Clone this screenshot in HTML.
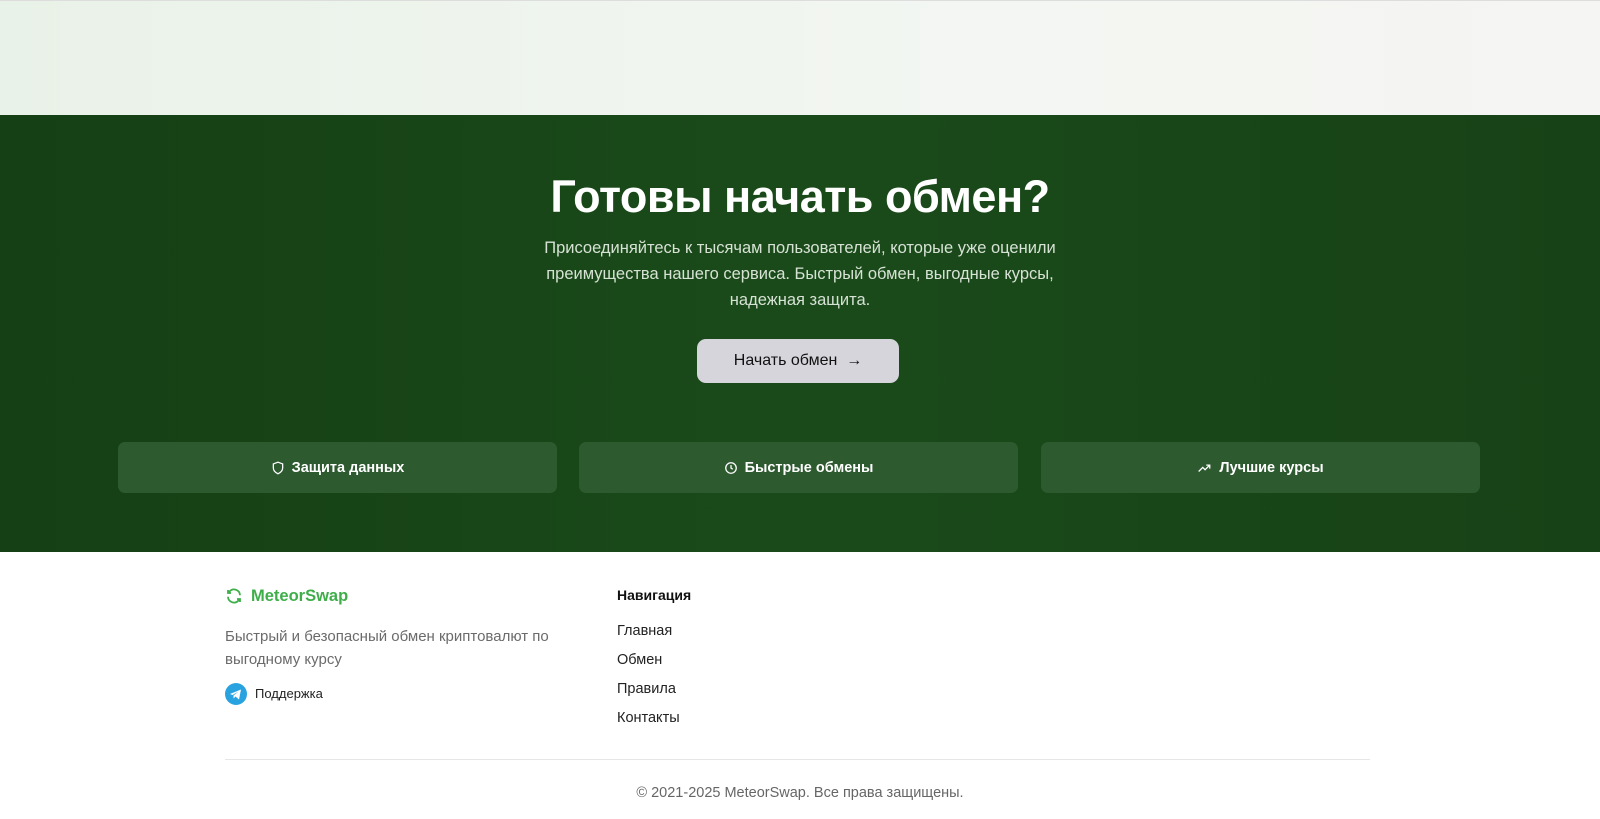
<!DOCTYPE html>
<html><head><meta charset="utf-8"><style>
*{margin:0;padding:0;box-sizing:border-box}
body{width:1600px;height:819px;overflow:hidden;font-family:"Liberation Sans","DejaVu Sans",sans-serif;background:#fff;position:relative}
.top{position:absolute;left:0;top:0;width:1600px;height:115px;background:linear-gradient(90deg,#e9f2e8,#f3f6f2 60%,#f5f5f3);border-top:1px solid #ddd}
.hero{position:absolute;left:0;top:115px;width:1600px;height:437px;background:linear-gradient(90deg,#153f15,#1a4a1a 50%,#174217)}
h1{position:absolute;top:56px;width:100%;text-align:center;color:#fff;font-size:45px;font-weight:bold;letter-spacing:-0.5px}
.sub{position:absolute;top:120px;left:515px;width:570px;text-align:center;color:#d6e2d4;font-size:16.5px;line-height:26px}
.btn{position:absolute;left:697px;top:224px;width:202px;height:44px;background:#d7d5dc;border-radius:9px;color:#111;font-size:16px;line-height:44px;text-align:center}
.card{position:absolute;top:327px;height:51px;width:439px;background:#2d5a2f;border-radius:7px;color:#fff;font-weight:bold;font-size:14.5px;display:flex;align-items:center;justify-content:center;gap:7px}
.t{position:absolute;font-size:14px}
</style></head><body>
<div class="top"></div>
<div class="hero">
<h1>Готовы начать обмен?</h1>
<div class="sub">Присоединяйтесь к тысячам пользователей, которые уже оценили преимущества нашего сервиса. Быстрый обмен, выгодные курсы, надежная защита.</div>
<div class="btn">Начать обмен &nbsp;→</div>
<div class="card" style="left:118px"><svg width="14" height="14" viewBox="0 0 24 24" fill="none" stroke="#fff" stroke-width="2.2"><path d="M12 2l8 3v7c0 5-4 8-8 10-4-2-8-5-8-10V5z"/></svg>Защита данных</div>
<div class="card" style="left:579px"><svg width="14" height="14" viewBox="0 0 24 24" fill="none" stroke="#fff" stroke-width="2.2"><circle cx="12" cy="12" r="9"/><path d="M12 7v5l3 2"/></svg>Быстрые обмены</div>
<div class="card" style="left:1041px"><svg width="15" height="14" viewBox="0 0 24 24" fill="none" stroke="#fff" stroke-width="2.2"><path d="M2 18l7-7 4 4 8-8M15 7h6v6"/></svg>Лучшие курсы</div>
</div>
<svg style="position:absolute;left:225px;top:587px" width="18" height="18" viewBox="0 0 24 24" fill="none" stroke="#3fae4a" stroke-width="2.4"><path d="M20 11a8 8 0 0 0-14-5l-2 2M4 4v4h4M4 13a8 8 0 0 0 14 5l2-2M20 20v-4h-4"/></svg>
<div class="t" style="left:251px;top:587px;color:#3fae4a;font-weight:bold;font-size:16.5px">MeteorSwap</div>
<div class="t" style="left:225px;top:625px;color:#6b6b6b;line-height:23px;width:370px;font-size:15px">Быстрый и безопасный обмен криптовалют по выгодному курсу</div>
<svg style="position:absolute;left:225px;top:683px" width="22" height="22" viewBox="0 0 22 22"><circle cx="11" cy="11" r="11" fill="#29a3e0"/><path d="M5 11l11-4.5-2 10-3.5-3-2 2v-3l5-4-6 3.5z" fill="#fff"/></svg>
<div class="t" style="left:255px;top:686px;color:#222;font-size:13px">Поддержка</div>
<div class="t" style="left:617px;top:587px;color:#111;font-weight:bold">Навигация</div>
<div class="t" style="left:617px;top:623px;color:#222;font-size:14.5px">Главная</div>
<div class="t" style="left:617px;top:652px;color:#222;font-size:14.5px">Обмен</div>
<div class="t" style="left:617px;top:681px;color:#222;font-size:14.5px">Правила</div>
<div class="t" style="left:617px;top:710px;color:#222;font-size:14.5px">Контакты</div>
<div style="position:absolute;left:225px;top:759px;width:1145px;height:1px;background:#e6e6e6"></div>
<div class="t" style="left:0;width:1600px;text-align:center;top:785px;color:#666;font-size:14.5px">© 2021-2025 MeteorSwap. Все права защищены.</div>
</body></html>
